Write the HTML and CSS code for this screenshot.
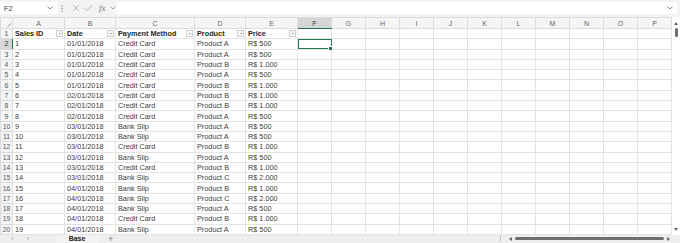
FILE: index.html
```html
<!DOCTYPE html>
<html lang="en">
<head>
    <meta charset="UTF-8">
    <title>Sales - Base</title>
    <link rel="stylesheet" href="styles.css">
</head>
<body>
<div class="app">
    <!-- formula bar -->
    <div class="formula-bar">
        <div class="name-box">
            <span>F2</span>
            <svg class="chev" width="6" height="4" viewBox="0 0 6 4"><path d="M0.5 0.5 L3 3 L5.5 0.5" fill="none" stroke="#777" stroke-width="0.9"/></svg>
        </div>
        <div class="bar-dots">
            <svg width="2" height="7" viewBox="0 0 2 7"><circle cx="1" cy="1" r="0.7" fill="#888"/><circle cx="1" cy="3.5" r="0.7" fill="#888"/><circle cx="1" cy="6" r="0.7" fill="#888"/></svg>
        </div>
        <div class="bar-icons">
            <svg width="8" height="8" viewBox="0 0 8 8"><path d="M1 1 L7 7 M7 1 L1 7" stroke="#b4b4b4" stroke-width="0.9"/></svg>
            <svg width="9" height="8" viewBox="0 0 9 8"><path d="M0.8 4.2 L3.2 6.6 L8.2 1" fill="none" stroke="#b4b4b4" stroke-width="0.9"/></svg>
            <span class="fx">fx</span>
            <svg width="6" height="4" viewBox="0 0 6 4"><path d="M0.5 0.5 L3 3 L5.5 0.5" fill="none" stroke="#999" stroke-width="0.9"/></svg>
        </div>
        <div class="formula-input">
            <svg width="6" height="4" viewBox="0 0 6 4"><path d="M0.5 0.5 L3 3 L5.5 0.5" fill="none" stroke="#777" stroke-width="0.9"/></svg>
        </div>
    </div>

    <!-- grid -->
    <div class="sheet-wrap">
        <table class="sheet">
            <colgroup>
                <col style="width:12px"><col style="width:52px"><col style="width:51px"><col style="width:79px"><col style="width:51px"><col style="width:52px">
                <col class="narrow"><col class="narrow"><col class="narrow"><col class="narrow"><col class="narrow"><col class="narrow"><col class="narrow"><col class="narrow"><col class="narrow"><col class="narrow"><col class="narrow">
            </colgroup>
            <tr class="col-heads">
                <th class="corner"></th><th>A</th><th>B</th><th>C</th><th>D</th><th>E</th><th class="hl-col">F</th><th>G</th><th>H</th><th>I</th><th>J</th><th>K</th><th>L</th><th>M</th><th>N</th><th>O</th><th>P</th>
            </tr>
            <tr class="head-row">
                <th class="rh">1</th>
                <td><div class="flt"><span>Sales ID</span><i class="flt-btn"></i></div></td>
                <td><div class="flt"><span>Date</span><i class="flt-btn"></i></div></td>
                <td><div class="flt"><span>Payment Method</span><i class="flt-btn"></i></div></td>
                <td><div class="flt"><span>Product</span><i class="flt-btn"></i></div></td>
                <td><div class="flt"><span>Price</span><i class="flt-btn"></i></div></td>
                <td></td><td></td><td></td><td></td><td></td><td></td><td></td><td></td><td></td><td></td><td></td>
            </tr>
            <tr><th class="rh hl-row">2</th><td>1</td><td>01/01/2018</td><td>Credit Card</td><td>Product A</td><td>R$ 500</td><td class="sel"></td><td></td><td></td><td></td><td></td><td></td><td></td><td></td><td></td><td></td><td></td></tr>
            <tr><th class="rh">3</th><td>2</td><td>01/01/2018</td><td>Credit Card</td><td>Product A</td><td>R$ 500</td><td></td><td></td><td></td><td></td><td></td><td></td><td></td><td></td><td></td><td></td><td></td></tr>
            <tr><th class="rh">4</th><td>3</td><td>01/01/2018</td><td>Credit Card</td><td>Product B</td><td>R$ 1.000</td><td></td><td></td><td></td><td></td><td></td><td></td><td></td><td></td><td></td><td></td><td></td></tr>
            <tr><th class="rh">5</th><td>4</td><td>01/01/2018</td><td>Credit Card</td><td>Product A</td><td>R$ 500</td><td></td><td></td><td></td><td></td><td></td><td></td><td></td><td></td><td></td><td></td><td></td></tr>
            <tr><th class="rh">6</th><td>5</td><td>01/01/2018</td><td>Credit Card</td><td>Product B</td><td>R$ 1.000</td><td></td><td></td><td></td><td></td><td></td><td></td><td></td><td></td><td></td><td></td><td></td></tr>
            <tr><th class="rh">7</th><td>6</td><td>02/01/2018</td><td>Credit Card</td><td>Product B</td><td>R$ 1.000</td><td></td><td></td><td></td><td></td><td></td><td></td><td></td><td></td><td></td><td></td><td></td></tr>
            <tr><th class="rh">8</th><td>7</td><td>02/01/2018</td><td>Credit Card</td><td>Product B</td><td>R$ 1.000</td><td></td><td></td><td></td><td></td><td></td><td></td><td></td><td></td><td></td><td></td><td></td></tr>
            <tr><th class="rh">9</th><td>8</td><td>02/01/2018</td><td>Credit Card</td><td>Product A</td><td>R$ 500</td><td></td><td></td><td></td><td></td><td></td><td></td><td></td><td></td><td></td><td></td><td></td></tr>
            <tr><th class="rh">10</th><td>9</td><td>03/01/2018</td><td>Bank Slip</td><td>Product A</td><td>R$ 500</td><td></td><td></td><td></td><td></td><td></td><td></td><td></td><td></td><td></td><td></td><td></td></tr>
            <tr><th class="rh">11</th><td>10</td><td>03/01/2018</td><td>Bank Slip</td><td>Product A</td><td>R$ 500</td><td></td><td></td><td></td><td></td><td></td><td></td><td></td><td></td><td></td><td></td><td></td></tr>
            <tr><th class="rh">12</th><td>11</td><td>03/01/2018</td><td>Credit Card</td><td>Product B</td><td>R$ 1.000</td><td></td><td></td><td></td><td></td><td></td><td></td><td></td><td></td><td></td><td></td><td></td></tr>
            <tr><th class="rh">13</th><td>12</td><td>03/01/2018</td><td>Bank Slip</td><td>Product A</td><td>R$ 500</td><td></td><td></td><td></td><td></td><td></td><td></td><td></td><td></td><td></td><td></td><td></td></tr>
            <tr><th class="rh">14</th><td>13</td><td>03/01/2018</td><td>Credit Card</td><td>Product B</td><td>R$ 1.000</td><td></td><td></td><td></td><td></td><td></td><td></td><td></td><td></td><td></td><td></td><td></td></tr>
            <tr><th class="rh">15</th><td>14</td><td>03/01/2018</td><td>Bank Slip</td><td>Product C</td><td>R$ 2.000</td><td></td><td></td><td></td><td></td><td></td><td></td><td></td><td></td><td></td><td></td><td></td></tr>
            <tr><th class="rh">16</th><td>15</td><td>04/01/2018</td><td>Bank Slip</td><td>Product B</td><td>R$ 1.000</td><td></td><td></td><td></td><td></td><td></td><td></td><td></td><td></td><td></td><td></td><td></td></tr>
            <tr><th class="rh">17</th><td>16</td><td>04/01/2018</td><td>Bank Slip</td><td>Product C</td><td>R$ 2.000</td><td></td><td></td><td></td><td></td><td></td><td></td><td></td><td></td><td></td><td></td><td></td></tr>
            <tr><th class="rh">18</th><td>17</td><td>04/01/2018</td><td>Bank Slip</td><td>Product A</td><td>R$ 500</td><td></td><td></td><td></td><td></td><td></td><td></td><td></td><td></td><td></td><td></td><td></td></tr>
            <tr><th class="rh">19</th><td>18</td><td>04/01/2018</td><td>Credit Card</td><td>Product B</td><td>R$ 1.000</td><td></td><td></td><td></td><td></td><td></td><td></td><td></td><td></td><td></td><td></td><td></td></tr>
            <tr><th class="rh">20</th><td>19</td><td>04/01/2018</td><td>Bank Slip</td><td>Product A</td><td>R$ 500</td><td></td><td></td><td></td><td></td><td></td><td></td><td></td><td></td><td></td><td></td><td></td></tr>
        </table>
        <div class="vscroll">
            <i class="arrow-up"></i>
            <div class="vthumb"></div>
            <div class="vspace"></div>
            <i class="arrow-down"></i>
        </div>
    </div>

    <!-- sheet tabs -->
    <div class="tabs">
        <div class="tab-nav"><span>‹</span><span>›</span></div>
        <div class="tab active">Base</div>
        <div class="tab-add">+</div>
        <div class="tab-fill"></div>
        <div class="tab-split"></div>
        <div class="hscroll">
            <i class="arrow-left"></i>
            <div class="hthumb"></div>
            <i class="arrow-right"></i>
        </div>
    </div>
</div>
</body>
</html>
```

FILE: styles.css
```css
body {
    margin: 0;
    font-family: "Liberation Sans", Arial, sans-serif;
    background: #fff;
    color: #333;
}

.app {
    width: 680px;
    height: 243px;
    overflow: hidden;
    display: flex;
    flex-direction: column;
}

/* formula bar */
.formula-bar {
    height: 17px;
    flex: none;
    display: flex;
    align-items: center;
    background: #f3f3f3;
    padding: 0 3px 1px 0;
    box-sizing: border-box;
}

.name-box {
    width: 58px;
    height: 12px;
    background: #fff;
    display: flex;
    align-items: center;
    justify-content: space-between;
    padding: 0 5px 0 4px;
    box-sizing: border-box;
    font-size: 7.5px;
    color: #444;
}

.bar-dots {
    width: 8px;
    display: flex;
    justify-content: center;
}

.bar-icons {
    width: 50px;
    display: flex;
    align-items: center;
    gap: 4px;
    padding-left: 6px;
    box-sizing: border-box;
}

.fx {
    font-family: "Liberation Serif", serif;
    font-style: italic;
    font-size: 9px;
    color: #777;
    margin-left: 2px;
}

.formula-input {
    flex: 1;
    height: 12px;
    background: #fff;
    border-radius: 2px;
    display: flex;
    align-items: center;
    justify-content: flex-end;
    padding-right: 4px;
}

/* grid */
.sheet-wrap {
    display: flex;
    flex: none;
}

.sheet {
    width: 671px;
    border-collapse: collapse;
    table-layout: fixed;
    font-size: 7.3px;
}

.narrow {
    width: 34px;
}

.sheet th,
.sheet td {
    border: 1px solid #e3e3e3;
    padding: 0 0 0 2px;
    height: 9.3px;
    line-height: 9px;
    white-space: nowrap;
    overflow: hidden;
    text-align: left;
    font-weight: normal;
    color: #404040;
}

.col-heads th {
    height: 10px;
    background: #f5f5f5;
    border-color: #dcdcdc;
    text-align: center;
    color: #666;
    font-size: 7px;
    padding: 0;
}

.col-heads .corner {
    background: #f5f5f5 linear-gradient(135deg, transparent 60%, #c4c4c4 60%, #c4c4c4 78%, transparent 78%) no-repeat right 1px bottom 1px / 6px 6px;
}

.sheet .rh {
    background: #f5f5f5;
    border-color: #dcdcdc;
    text-align: center;
    color: #555;
    padding: 0;
    font-size: 6.8px;
}

.sheet .hl-col {
    background: #d6d6d6;
    border-bottom: 1px solid #217346;
    color: #333;
}

.sheet .hl-row {
    background: #d6d6d6;
    border-right: 1px solid #217346;
    color: #333;
}

.head-row td {
    font-weight: bold;
    color: #262626;
}

.flt {
    display: flex;
    align-items: center;
    justify-content: space-between;
    padding-right: 1px;
}

.flt-btn {
    width: 7px;
    height: 7px;
    box-sizing: border-box;
    border: 1px solid #cfcfcf;
    background: #f8f8f8;
    display: flex;
    align-items: center;
    justify-content: center;
}

.flt-btn::after {
    content: "";
    border-left: 1.5px solid transparent;
    border-right: 1.5px solid transparent;
    border-top: 1.5px solid #555;
}

.sheet td.sel {
    position: relative;
    outline: 1px solid #2d7a4f;
    outline-offset: -1px;
    overflow: visible;
}

.sel::after {
    content: "";
    position: absolute;
    right: -2px;
    bottom: -2px;
    width: 3px;
    height: 3px;
    background: #217346;
    border: 1px solid #fff;
}

/* scrollbars */
.vscroll {
    width: 9px;
    display: flex;
    flex-direction: column;
    align-items: center;
    padding-top: 5px;
    box-sizing: border-box;
}

.arrow-up {
    border-left: 2.5px solid transparent;
    border-right: 2.5px solid transparent;
    border-bottom: 3px solid #666;
}

.vthumb {
    width: 3px;
    height: 9px;
    margin-top: 3px;
    border-radius: 2px;
    background: #707070;
}

.vspace {
    flex: 1;
}

.arrow-down {
    border-left: 2.5px solid transparent;
    border-right: 2.5px solid transparent;
    border-top: 3px solid #666;
    margin-bottom: 4px;
}

/* tabs */
.tabs {
    flex: 1;
    min-height: 0;
    display: flex;
    align-items: center;
    background: #efeded;
    font-size: 7px;
    line-height: 8px;
    color: #999;
}

.tab-nav {
    width: 44px;
    display: flex;
    gap: 13px;
    padding-left: 11px;
    box-sizing: border-box;
    font-size: 8px;
    color: #aaa;
}

.tab {
    width: 42px;
    height: 100%;
    display: flex;
    align-items: center;
    justify-content: center;
    box-sizing: border-box;
    margin-left: 12px;
}

.tab.active {
    font-weight: bold;
    color: #222;
    background: #f4f3f3;
}

.tab-add {
    margin-left: 10px;
    font-size: 9px;
    color: #777;
}

.tab-fill {
    flex: 1;
}

.tab-split {
    width: 1px;
    height: 5px;
    background: #bbb;
    margin-right: 8px;
}

.hscroll {
    width: 161px;
    display: flex;
    align-items: center;
    gap: 3px;
    padding-right: 10px;
}

.arrow-left {
    border-top: 2px solid transparent;
    border-bottom: 2px solid transparent;
    border-right: 3px solid #666;
}

.hthumb {
    flex: 1;
    height: 3px;
    border-radius: 2px;
    background: #6e6e6e;
}

.arrow-right {
    border-top: 2px solid transparent;
    border-bottom: 2px solid transparent;
    border-left: 3px solid #666;
}
```
